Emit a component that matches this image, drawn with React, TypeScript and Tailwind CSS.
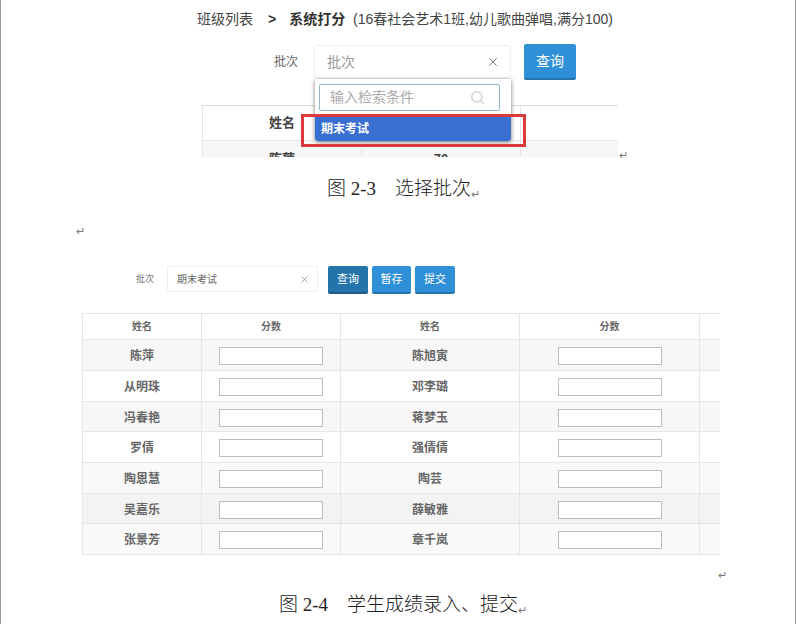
import { Search, X } from 'lucide-react';

const cjk = "font-['Liberation_Sans','Noto_Sans_CJK_SC',sans-serif]";
const serif = "font-['Liberation_Serif','Noto_Sans_CJK_SC',serif]";

const rows = [
  { left: '陈萍', right: '陈旭寅', bg: 'bg-[#f7f7f7]', h: 'h-[31px]' },
  { left: '从明珠', right: '邓李璐', bg: 'bg-white', h: 'h-[31px]' },
  { left: '冯春艳', right: '蒋梦玉', bg: 'bg-[#f7f7f7]', h: 'h-[30px]' },
  { left: '罗倩', right: '强倩倩', bg: 'bg-white', h: 'h-[31px]' },
  { left: '陶恩慧', right: '陶芸', bg: 'bg-[#f9f9f9]', h: 'h-[31px]' },
  { left: '吴嘉乐', right: '薛敏雅', bg: 'bg-[#f3f3f3]', h: 'h-[30px]' },
  { left: '张景芳', right: '章千岚', bg: 'bg-[#f9f9f9]', h: 'h-[31px]' },
];

const cell = 'flex items-center justify-center border-r border-[#e6e6e6]';
const grid = 'grid grid-cols-[119px_139px_179px_180px_21px] border-b border-[#e6e6e6]';

function ReturnMark({ className }: { className: string }) {
  return <span className={`block text-[11px] leading-[10px] text-[#777] ${className}`}>↵</span>;
}

function ScoreInput() {
  return <div className="w-[104px] h-[18px] bg-white border border-[#bdbdbd]" />;
}

function Btn({ label, className }: { label: string; className: string }) {
  return (
    <div className={`flex items-center justify-center h-[28px] rounded-[2px] border-b-2 text-white text-[11px] ${className}`}>
      {label}
    </div>
  );
}

export default function App() {
  return (
    <div className={`${cjk} relative w-[796px] h-[624px] overflow-hidden bg-white border-x border-[#9a9a9a] text-[#555]`}>
      {/* figure 2-3 */}
      <div className="relative ml-[196px] w-[432px] h-[157px]">
        <div className="h-[38px] pt-[9px] text-[14px] leading-[20px] text-[#444] whitespace-nowrap">
          班级列表
          <span className="ml-[15px] mr-[13px] font-bold text-[#333]">&gt;</span>
          <span className="mr-[4px] font-bold text-[#333]">系统打分</span> (16春社会艺术1班,幼儿歌曲弹唱,满分100)
        </div>

        <div className="flex mt-[6px] h-[36px]">
          <div className="ml-[77px] w-[40px] flex items-center text-[12px] text-[#666]">批次</div>
          <div className="w-[197px] h-[34px] mt-[1px] flex items-center justify-between pl-[12px] pr-[10px] border border-[#eeeeee] rounded-[3px] text-[14px] text-[#999]">
            批次
            <X size={14} strokeWidth={1.5} className="text-[#666]" />
          </div>
          <Btn label="查询" className="ml-[13px] w-[52px] h-[36px] text-[14px] bg-[#2f90d8] border-[#2575ad]" />
        </div>

        <div className="ml-[5px] mt-[25px] w-[416px] h-[52px] overflow-hidden border-t border-[#dddddd]">
          <div className="grid grid-cols-[159px_159px_98px] h-[35px] border-b border-[#e6e6e6] border-l">
            <div className={`${cell} text-[13px] font-bold text-[#444]`}>姓名</div>
            <div className={cell} />
            <div />
          </div>
          <div className="grid grid-cols-[159px_159px_98px] h-[35px] bg-[#f7f7f7] border-l border-[#e6e6e6]">
            <div className={`${cell} text-[13px] font-bold text-[#444]`}>陈萍</div>
            <div className={`${cell} text-[13px] font-bold text-[#444]`}>70</div>
            <div />
          </div>
        </div>
        <ReturnMark className="absolute left-[422px] top-[150px]" />

        {/* open select dropdown */}
        <div className="absolute left-[118px] top-[79px] w-[196px] h-[62px] bg-white rounded-b-[3px] shadow-[0_1px_4px_rgba(0,0,0,0.55)] overflow-hidden">
          <div className="flex items-center justify-between ml-[4px] mt-[5px] w-[181px] h-[27px] pl-[10px] pr-[14px] border border-[#8fb9c4] rounded-[2px] text-[14px] text-[#aaa]">
            输入检索条件
            <Search size={15} strokeWidth={3} className="text-[#d8d8d8]" />
          </div>
          <div className="mt-[5px] h-[25px] pl-[6px] flex items-center bg-[#3a6fd2] text-white text-[12px] font-bold">期末考试</div>
        </div>
        <div className="absolute left-[104px] top-[114px] w-[225px] h-[33px] border-[3px] border-[#d93a40]" />
      </div>

      <div className={`${serif} flex items-end h-[42px] ml-[326px] text-[19px] leading-[24px] text-[#222] font-light whitespace-nowrap`}>
        <span className="mb-[-2px]">图 2-3　选择批次</span>
        <ReturnMark />
      </div>

      <ReturnMark className="ml-[75px] mt-[27px]" />

      {/* figure 2-4 */}
      <div className="flex ml-[135px] mt-[30px] h-[28px]">
        <div className="w-[31px] pt-[7px] text-[9px] leading-[12px] text-[#777]">批次</div>
        <div className="w-[151px] h-[26px] flex items-center justify-between pl-[9px] pr-[7px] border border-[#f0f0f0] rounded-[2px] text-[10px] text-[#666]">
          期末考试
          <X size={11} strokeWidth={1.5} className="text-[#777]" />
        </div>
        <Btn label="查询" className="ml-[10px] w-[40px] bg-[#2473ab] border-[#1c5c8a]" />
        <Btn label="暂存" className="ml-[4px] w-[39px] bg-[#2f90d8] border-[#2575ad]" />
        <Btn label="提交" className="ml-[4px] w-[40px] bg-[#2f90d8] border-[#2575ad]" />
      </div>

      <div className="ml-[81px] mt-[19px] w-[638px] overflow-hidden border-t border-l border-[#e6e6e6]">
        <div className={`${grid} h-[26px] text-[10px] font-bold text-[#666]`}>
          <div className={cell}>姓名</div>
          <div className={cell}>分数</div>
          <div className={cell}>姓名</div>
          <div className={cell}>分数</div>
          <div />
        </div>
        {rows.map((row) => (
          <div key={row.left} className={`${grid} ${row.h} ${row.bg} text-[12px] font-bold text-[#666]`}>
            <div className={`${cell} pt-[2px]`}>{row.left}</div>
            <div className={`${cell} pt-[2px]`}><ScoreInput /></div>
            <div className={`${cell} pt-[2px]`}>{row.right}</div>
            <div className={`${cell} pt-[2px]`}><ScoreInput /></div>
            <div />
          </div>
        ))}
      </div>

      <ReturnMark className="ml-[717px] mt-[15px]" />

      <div className={`${serif} flex items-end ml-[278px] mt-[13px] text-[19px] leading-[24px] text-[#222] font-light whitespace-nowrap`}>
        <span>图 2-4　学生成绩录入、提交</span>
        <ReturnMark className="mb-[2px]" />
      </div>
    </div>
  );
}
